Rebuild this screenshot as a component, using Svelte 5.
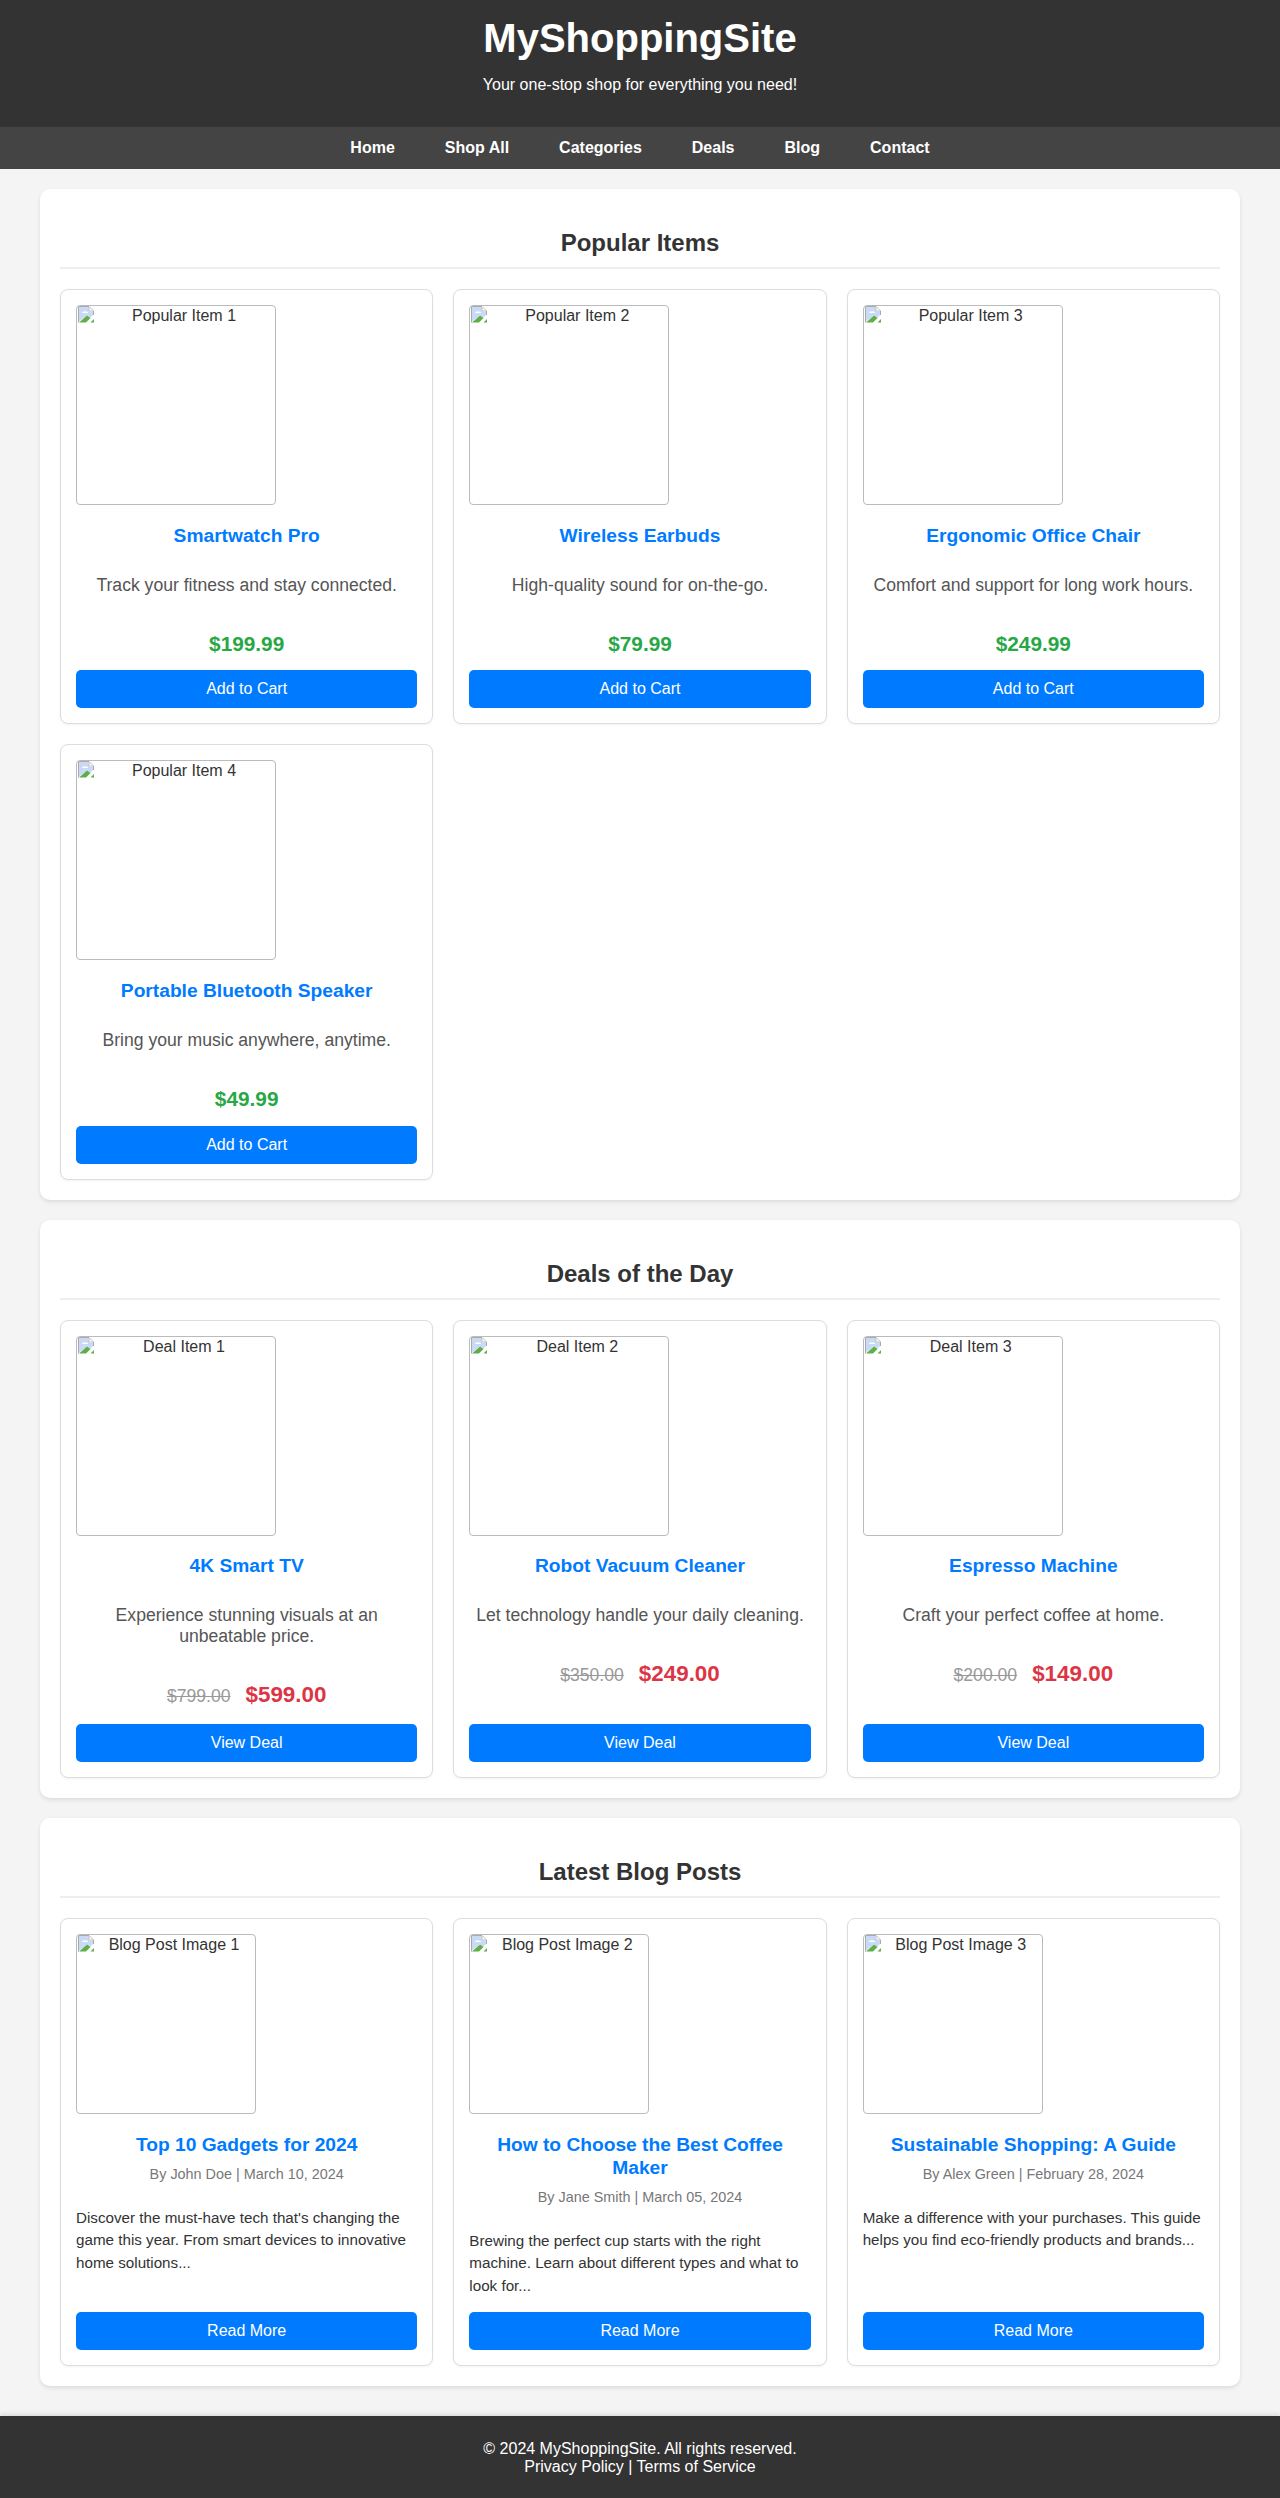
<script>
  const popular = [
    { alt: 'Popular Item 1', title: 'Smartwatch Pro', desc: 'Track your fitness and stay connected.', price: '$199.99' },
    { alt: 'Popular Item 2', title: 'Wireless Earbuds', desc: 'High-quality sound for on-the-go.', price: '$79.99' },
    { alt: 'Popular Item 3', title: 'Ergonomic Office Chair', desc: 'Comfort and support for long work hours.', price: '$249.99' },
    { alt: 'Popular Item 4', title: 'Portable Bluetooth Speaker', desc: 'Bring your music anywhere, anytime.', price: '$49.99' }
  ];
  const deals = [
    { alt: 'Deal Item 1', title: '4K Smart TV', desc: 'Experience stunning visuals at an unbeatable price.', old: '$799.00', price: '$599.00' },
    { alt: 'Deal Item 2', title: 'Robot Vacuum Cleaner', desc: 'Let technology handle your daily cleaning.', old: '$350.00', price: '$249.00' },
    { alt: 'Deal Item 3', title: 'Espresso Machine', desc: 'Craft your perfect coffee at home.', old: '$200.00', price: '$149.00' }
  ];
  const posts = [
    { alt: 'Blog Post Image 1', title: 'Top 10 Gadgets for 2024', meta: 'By John Doe | March 10, 2024', text: "Discover the must-have tech that's changing the game this year. From smart devices to innovative home solutions..." },
    { alt: 'Blog Post Image 2', title: 'How to Choose the Best Coffee Maker', meta: 'By Jane Smith | March 05, 2024', text: 'Brewing the perfect cup starts with the right machine. Learn about different types and what to look for...' },
    { alt: 'Blog Post Image 3', title: 'Sustainable Shopping: A Guide', meta: 'By Alex Green | February 28, 2024', text: 'Make a difference with your purchases. This guide helps you find eco-friendly products and brands...' }
  ];
  const links = ['Home', 'Shop All', 'Categories', 'Deals', 'Blog', 'Contact'];
</script>

{#snippet broken(alt, blog)}
  <div class="thumb" class:blog>
    <svg class="broken" width="16" height="17" viewBox="0 0 16 17" aria-hidden="true">
      <path d="M1 1H11V5.5H15V9L12 12L9 9.5L1 15.5Z" fill="#c9daf8" />
      <path d="M4 7a2.5 1.5 0 0 1 6 0Z" fill="#fff" />
      <path d="M1 16.5L9 9.5L12.5 12L8 16.5Z" fill="#5fae4a" />
      <path d="M12.5 16.5L16 13V16.5Z" fill="#5fae4a" />
      <path d="M0.5 16.5V0.5H11L15.5 5V9" fill="none" stroke="#aaa" />
      <path d="M11 1V5H15" fill="#fff" stroke="#c4c4c4" />
    </svg>{alt}
  </div>
{/snippet}

<header class="top">
  <h1>MyShoppingSite</h1>
  <p>Your one-stop shop for everything you need!</p>
</header>

<nav class="menu">
  {#each links as link}
    <a href="#top">{link}</a>
  {/each}
</nav>

<main class="page">
  <section class="panel">
    <h2>Popular Items</h2>
    <div class="cards">
      {#each popular as item}
        <article class="card">
          {@render broken(item.alt, false)}
          <h3>{item.title}</h3>
          <p class="desc">{item.desc}</p>
          <div class="price">{item.price}</div>
          <button type="button">Add to Cart</button>
        </article>
      {/each}
    </div>
  </section>

  <section class="panel">
    <h2>Deals of the Day</h2>
    <div class="cards">
      {#each deals as item}
        <article class="card">
          {@render broken(item.alt, false)}
          <h3>{item.title}</h3>
          <p class="desc">{item.desc}</p>
          <div class="deal-price"><s>{item.old}</s><span>{item.price}</span></div>
          <button type="button">View Deal</button>
        </article>
      {/each}
    </div>
  </section>

  <section class="panel">
    <h2>Latest Blog Posts</h2>
    <div class="cards">
      {#each posts as post}
        <article class="card">
          {@render broken(post.alt, true)}
          <h3>{post.title}</h3>
          <p class="meta">{post.meta}</p>
          <p class="excerpt">{post.text}</p>
          <button type="button">Read More</button>
        </article>
      {/each}
    </div>
  </section>
</main>

<footer class="bottom">
  <p>© 2024 MyShoppingSite. All rights reserved.</p>
  <p><a href="#top">Privacy Policy</a> | <a href="#top">Terms of Service</a></p>
</footer>

<style>
  :global(body) {
    margin: 0;
    background: #f4f4f4;
    color: #333;
    font-family: "Liberation Sans", Arial, sans-serif;
    line-height: 1.6;
  }

  .top {
    background: #333;
    color: #fff;
    text-align: center;
    height: 127px;
    box-sizing: border-box;
    padding-top: 6px;
  }

  .top h1 {
    margin: 0;
    font-size: 40px;
    line-height: 64px;
  }

  .top p {
    margin: 2px 0 0;
    font-size: 16px;
    line-height: 25.6px;
  }

  .menu {
    background: #444;
    height: 42px;
    display: flex;
    justify-content: center;
    align-items: center;
    gap: 50px;
  }

  .menu a {
    color: #fff;
    font-weight: 700;
    font-size: 16px;
    text-decoration: none;
  }

  .page {
    max-width: 1200px;
    margin: 20px auto 0;
    display: flex;
    flex-direction: column;
    gap: 20px;
    padding-bottom: 30px;
  }

  .panel {
    background: #fff;
    border-radius: 10px;
    padding: 20px;
    box-shadow: 0 2px 4px rgba(0, 0, 0, 0.1);
  }

  h2 {
    margin: 14px 0 20px;
    color: #333;
    font-size: 24px;
    line-height: 39px;
    text-align: center;
    border-bottom: 2px solid #eee;
    padding-bottom: 5px;
  }

  .cards {
    display: grid;
    grid-template-columns: repeat(3, 1fr);
    gap: 20px;
  }

  .card {
    border: 1px solid #ddd;
    border-radius: 8px;
    padding: 15px;
    background: #fff;
    text-align: center;
    display: flex;
    flex-direction: column;
    box-shadow: 0 1px 3px rgba(0, 0, 0, 0.05);
  }

  .thumb {
    width: 200px;
    height: 200px;
    box-sizing: border-box;
    border: 1px solid #bbb;
    border-radius: 4px;
    padding: 0 1px;
    text-align: center;
    font-size: 16px;
    line-height: 19px;
    color: #333;
    overflow: hidden;
    flex: none;
  }

  .thumb.blog {
    width: 180px;
    height: 180px;
  }

  .broken {
    float: left;
  }

  h3 {
    margin: 18.5px 0 0;
    font-size: 19.2px;
    line-height: 23px;
    color: #007bff;
  }

  .desc {
    margin: 28px 0 34px;
    font-size: 17.6px;
    line-height: 21px;
    color: #555;
  }

  .price {
    font-size: 20.8px;
    font-weight: 700;
    color: #28a745;
    line-height: 27px;
    margin-bottom: 13.9px;
  }

  .deal-price {
    line-height: 27px;
    margin-bottom: 13.9px;
    font-weight: 700;
  }

  .deal-price s {
    color: #999;
    font-size: 17.6px;
    font-weight: 400;
    margin-right: 15px;
  }

  .deal-price span {
    color: #dc3545;
    font-size: 22.4px;
  }

  .meta {
    margin: 7px 0 21px;
    font-size: 14.4px;
    line-height: 23px;
    color: #777;
  }

  .excerpt {
    margin: 0 0 14px;
    text-align: left;
    font-size: 15.2px;
    line-height: 22.8px;
    color: #333;
  }

  button {
    display: block;
    width: 100%;
    height: 38px;
    margin-top: auto;
    border: none;
    border-radius: 5px;
    background: #007bff;
    color: #fff;
    font-family: inherit;
    font-size: 16px;
    padding: 0;
    flex: none;
  }

  .bottom {
    background: #333;
    color: #fff;
    text-align: center;
    height: 84px;
    box-sizing: border-box;
    padding-top: 24px;
    font-size: 16px;
    line-height: 18px;
    box-shadow: 0 -2px 4px rgba(0, 0, 0, 0.1);
  }

  .bottom p {
    margin: 0;
  }

  .bottom a {
    color: #fff;
    text-decoration: none;
  }
</style>
